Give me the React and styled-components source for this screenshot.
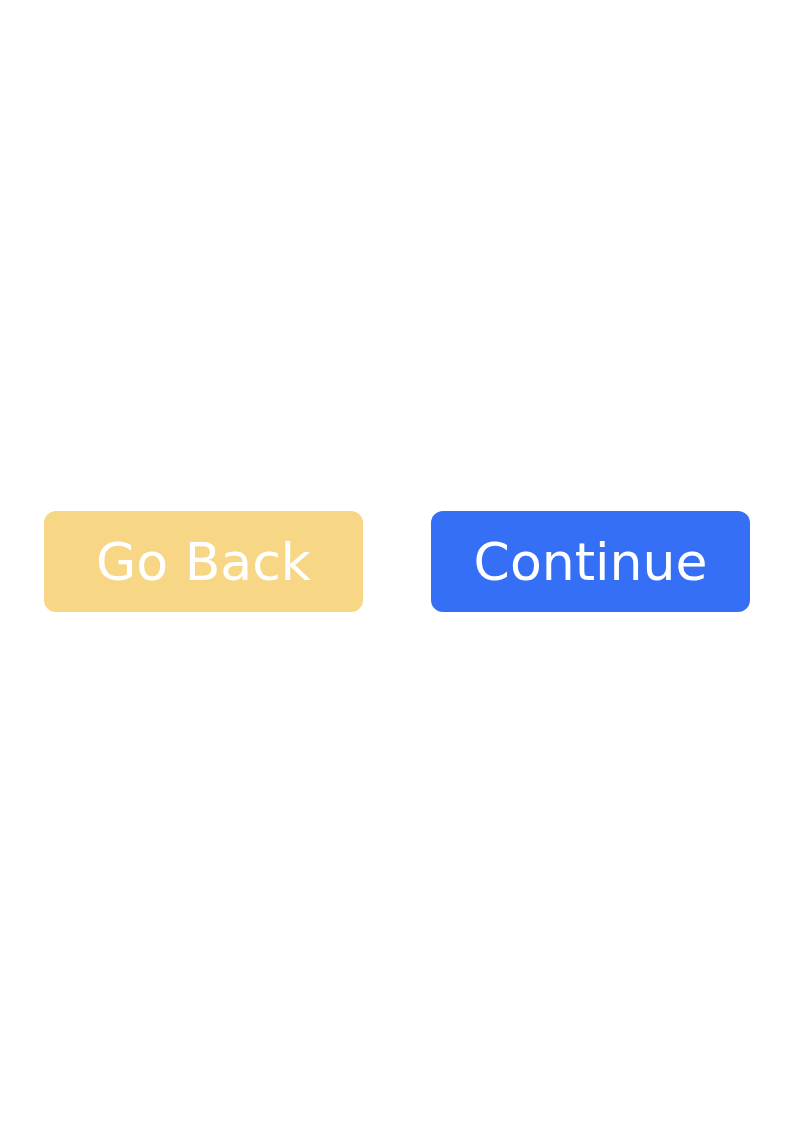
import React from 'react'
import styled, { createGlobalStyle } from 'styled-components'

const GlobalStyle = createGlobalStyle`
  html, body {
    margin: 0;
    padding: 0;
    background: #ffffff;
  }
  #root {
    min-height: 100vh;
  }
`

const Page = styled('div')`
  height: 1123px;
  display: flex;
  align-items: center;
  justify-content: space-between;
  padding: 0 44px;
  box-sizing: border-box;
`

const Button = styled('button')`
  width: 319px;
  height: 101px;
  border: none;
  border-radius: 12px;
  padding: 0;
  background: ${(props) => (props.variant === 'secondary' ? '#f7d786' : '#346ff5')};
  color: #ffffff;
  font-family: "DejaVu Sans", sans-serif;
  font-size: 52px;
  line-height: 1;
  cursor: pointer;
`

const App = () => {
  return (
    <>
      <GlobalStyle />
      <Page>
        <Button variant="secondary">Go Back</Button>
        <Button>Continue</Button>
      </Page>
    </>
  )
}

export default App
